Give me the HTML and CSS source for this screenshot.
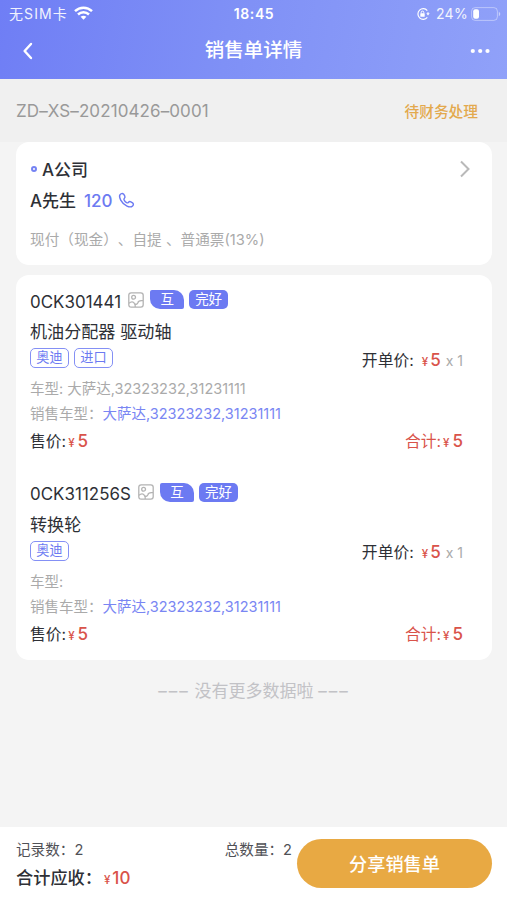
FILE: index.html
```html
<!DOCTYPE html>
<html lang="zh-CN">
<head>
    <meta charset="UTF-8">
    <meta name="viewport" content="width=device-width, initial-scale=1.0">
    <title>销售单详情</title>
    <link rel="stylesheet" href="styles.css">
</head>
<body>
    <header class="header">
        <div class="status-bar">
            <div class="status-left">
                <span class="carrier">无SIM卡</span>
                <svg class="wifi" width="19" height="14" viewBox="0 0 19 14" fill="none" stroke="#fff" stroke-width="2.5">
                    <path d="M1 5.1C5.8.5 13.2.5 18 5.1"/>
                    <path d="M4 8.5c3.1-2.9 7.9-2.9 11 0"/>
                    <path d="M6.6 10.8c1.7-1.5 4.1-1.5 5.8 0L9.5 13.8z" fill="#fff" stroke="none"/>
                </svg>
            </div>
            <span class="time">18:45</span>
            <div class="status-right">
                <svg class="lock" width="14" height="14" viewBox="0 0 14 14" fill="none" stroke="#fff" stroke-width="1.2">
                    <path d="M11.3 3.6A5.3 5.3 0 1 0 11.3 10.4M12 5.2v1.6"/>
                    <path d="M10.3 6.2h3.4L12 8.6z" fill="#fff" stroke="none"/>
                    <rect x="4.3" y="6.3" width="4.4" height="3.5" rx=".6" fill="#fff" stroke="none"/>
                    <path d="M5.2 6.5V5.4a1.3 1.3 0 0 1 2.6 0v1.1" stroke-width="1"/>
                </svg>
                <span class="percent">24%</span>
                <svg class="battery" width="30" height="14" viewBox="0 0 30 14" fill="none">
                    <rect x=".6" y=".6" width="25.8" height="12.8" rx="3.6" stroke="#fff" stroke-opacity=".4"/>
                    <rect x="2.2" y="2.2" width="5.8" height="9.6" rx="2" fill="#fff"/>
                    <path d="M27.8 4.8c2 .8 2 3.6 0 4.4z" fill="#fff" fill-opacity=".5"/>
                </svg>
            </div>
        </div>
        <nav class="nav">
            <svg class="back" width="12" height="18" viewBox="0 0 12 18" fill="none" stroke="#fff" stroke-width="2.4" stroke-linecap="round" stroke-linejoin="round">
                <path d="M9 2L2.6 9 9 16"/>
            </svg>
            <h1>销售单详情</h1>
            <svg class="more" width="20" height="6" viewBox="0 0 20 6" fill="#fff">
                <circle cx="2.8" cy="3" r="2.1"/>
                <circle cx="10.2" cy="3" r="2.1"/>
                <circle cx="17.5" cy="3" r="2.1"/>
            </svg>
        </nav>
    </header>

    <div class="order-bar">
        <span class="order-no">ZD–XS–20210426–0001</span>
        <span class="order-status">待财务处理</span>
    </div>

    <main class="content">
        <section class="card customer">
            <div class="company">
                <i class="dot"></i>
                <span>A公司</span>
                <svg class="arrow" width="12" height="18" viewBox="0 0 12 18" fill="none" stroke="#b9b9b9" stroke-width="2">
                    <path d="M2 1.5L9.5 9 2 16.5"/>
                </svg>
            </div>
            <div class="contact">
                <span class="person">A先生</span>
                <a class="phone">120</a>
                <svg width="17" height="17" viewBox="0 0 17 17" fill="none" stroke="#6c7af2" stroke-width="1.4" stroke-linejoin="round">
                    <path d="M1.9 2.9C2.8 1.5 4.500 1 5.700 2.200l1.100 1.900c.5 1 .1 1.700-.6 2.400-.5.5-.4 1 .1 1.800.6 1 1.300 1.700 2.300 2.300.7.4 1.200.4 1.700-.1.700-.8 1.500-1.200 2.500-.7l1.800 1.100c1.100.8 1 2.100 0 3-1.400 1.300-3.500 1.200-5.600.2-2.700-1.300-5-3.500-6.300-6-1-2-1.700-3.700-.8-5.200z"/>
                </svg>
            </div>
            <p class="payment">现付（现金）、自提 、普通票(13%)</p>
        </section>

        <section class="card goods">
            <article class="item">
                <div class="item-head">
                    <span class="code">0CK301441</span>
                    <svg class="pic" width="16" height="16" viewBox="0 0 16 16" fill="none" stroke="#b3b3b3" stroke-width="1.3">
                        <rect x=".8" y=".8" width="14.4" height="14.4" rx="2.4"/>
                        <circle cx="5.6" cy="5.3" r="1.9"/>
                        <path d="M1 11.3c2.2-2 4.2-1.8 5.4.1 1 1.5 1 2.5.8 3.6M6.8 12c1.5.5 2.7.2 3-1.1.3-1.7 2.2-2.6 5.2-2.2"/>
                    </svg>
                    <span class="tag leaf">互</span>
                    <span class="tag">完好</span>
                </div>
                <h2 class="name">机油分配器 驱动轴</h2>
                <div class="brand-row">
                    <span class="brand">奥迪</span>
                    <span class="brand">进口</span>
                    <div class="unit">开单价:<span class="yen">¥</span><b>5</b><small>x 1</small></div>
                </div>
                <p class="model">车型: 大萨达,32323232,31231111</p>
                <p class="model sale">销售车型：<em>大萨达,32323232,31231111</em></p>
                <div class="price-row">
                    <div>售价:<span class="yen">¥</span><b>5</b></div>
                    <div class="total">合计:<span class="yen">¥</span><b>5</b></div>
                </div>
            </article>

            <article class="item">
                <div class="item-head">
                    <span class="code">0CK311256S</span>
                    <svg class="pic" width="16" height="16" viewBox="0 0 16 16" fill="none" stroke="#b3b3b3" stroke-width="1.3">
                        <rect x=".8" y=".8" width="14.4" height="14.4" rx="2.4"/>
                        <circle cx="5.6" cy="5.3" r="1.9"/>
                        <path d="M1 11.3c2.2-2 4.2-1.8 5.4.1 1 1.5 1 2.5.8 3.6M6.8 12c1.5.5 2.7.2 3-1.1.3-1.7 2.2-2.6 5.2-2.2"/>
                    </svg>
                    <span class="tag leaf">互</span>
                    <span class="tag">完好</span>
                </div>
                <h2 class="name">转换轮</h2>
                <div class="brand-row">
                    <span class="brand">奥迪</span>
                    <div class="unit">开单价:<span class="yen">¥</span><b>5</b><small>x 1</small></div>
                </div>
                <p class="model">车型:</p>
                <p class="model sale">销售车型：<em>大萨达,32323232,31231111</em></p>
                <div class="price-row">
                    <div>售价:<span class="yen">¥</span><b>5</b></div>
                    <div class="total">合计:<span class="yen">¥</span><b>5</b></div>
                </div>
            </article>
        </section>

        <p class="no-more"><span>–––</span> 没有更多数据啦 <span>–––</span></p>
    </main>

    <footer class="footer">
        <div class="summary">
            <div class="counts">
                <span>记录数：2</span>
                <span>总数量：2</span>
            </div>
            <div class="receivable">合计应收：<span class="yen">¥</span><b>10</b></div>
        </div>
        <button class="share">分享销售单</button>
    </footer>
</body>
</html>
```
FILE: styles.css
```css
* {
    box-sizing: border-box;
    margin: 0;
    padding: 0;
}
body {
    display: flex;
    flex-direction: column;
    height: 900px;
    overflow: hidden;
    font-family: Inter, "Noto Sans CJK SC", sans-serif;
    text-spacing-trim: space-all;
    background-color: #f4f4f4;
    color: #2e3036;
}
svg {
    display: block;
    flex-shrink: 0;
}
b, em, i {
    font-style: normal;
    font-weight: 500;
}

/* header */
.header {
    height: 79px;
    background: linear-gradient(100deg, #6f7ef5 0%, #7f90f6 45%, #90a1f9 100%);
    color: #fff;
}
.status-bar {
    display: grid;
    grid-template-columns: 1fr auto 1fr;
    align-items: center;
    height: 28px;
    padding: 0 6px 0 9px;
}
.status-left, .status-right {
    display: flex;
    align-items: center;
}
.status-right {
    justify-content: flex-end;
}
.carrier {
    font-size: 14px;
    letter-spacing: 1.1px;
    line-height: 20px;
    opacity: 0.9;
}
.wifi {
    margin: -2px 0 0 6px;
}
.time {
    font-size: 14px;
    font-weight: 600;
    letter-spacing: 0.6px;
    margin: -2px 2px 0 0;
}
.percent {
    margin: -1px 3px 0 6px;
    font-size: 14px;
    letter-spacing: 0.3px;
    opacity: 0.9;
}
.nav {
    display: flex;
    align-items: center;
    justify-content: space-between;
    height: 44px;
    padding: 0 17px 0 22px;
}
.nav h1 {
    padding-left: 3px;
    font-size: 19.5px;
    font-weight: 500;
    line-height: 44px;
}
.back {
    margin-top: 2px;
}
.more {
    margin-top: 2px;
}

/* order number */
.order-bar {
    display: flex;
    align-items: center;
    justify-content: space-between;
    height: 63px;
    padding: 0 29px 0 16px;
    background-color: #f0f0f0;
}
.order-no {
    font-size: 17px;
    letter-spacing: 0.1px;
    color: #999;
}
.order-status {
    font-size: 14.7px;
    font-weight: 500;
    color: #e3a94d;
}

/* cards */
.content {
    flex: 1;
    padding: 0 15px 0 16px;
}
.card {
    border-radius: 13px;
    background-color: #fff;
}
.customer {
    height: 123px;
    padding: 12px 21px 0 14px;
}
.company, .contact {
    display: flex;
    align-items: center;
    font-size: 17px;
    font-weight: 500;
}
.company {
    height: 29px;
}
.contact {
    height: 34px;
}
.person {
    margin-top: -1px;
}
.dot {
    width: 6px;
    height: 6px;
    margin: 0 5px 0 1px;
    border: 2px solid #7583f3;
    border-radius: 50%;
}
.arrow {
    margin-left: auto;
}
.phone {
    margin: 2px 5px 0 8px;
    color: #6c7af2;
}
.payment {
    margin-top: 10px;
    font-size: 14.65px;
    line-height: 26px;
    color: #aaa;
}
.goods {
    height: 385px;
    margin-top: 10px;
    padding: 11px 29px 0 14px;
}
.item {
    height: 192.5px;
}
.item-head {
    display: flex;
    align-items: center;
    height: 28px;
}
.code {
    padding-top: 3px;
    font-size: 16.9px;
    letter-spacing: 0.05px;
}
.pic {
    margin: -1px 6px 0 7px;
}
.tag {
    width: 39px;
    height: 19px;
    margin-top: -1px;
    border-radius: 5px;
    background-color: #6c7af2;
    color: #fff;
    font-size: 13.5px;
    line-height: 19px;
    text-align: center;
}
.leaf {
    width: 34px;
    margin-right: 5px;
    border-radius: 2px 10px 2px 10px;
}
.name {
    padding-top: 1px;
    font-size: 17.1px;
    font-weight: 400;
    line-height: 33px;
}
.brand-row {
    display: flex;
    align-items: center;
    gap: 5px;
    height: 20px;
}
.brand {
    width: 39px;
    height: 20px;
    border: 1.5px solid #8490f5;
    border-radius: 5px;
    color: #6c7af2;
    font-size: 13.2px;
    line-height: 17px;
    text-align: center;
}
.unit {
    margin-left: auto;
    padding-top: 2px;
    font-size: 15.8px;
    white-space: nowrap;
}
.unit .yen {
    margin-left: 8px;
}
.unit small {
    margin-left: 5px;
    font-size: 14px;
    color: #aaa;
}
.yen {
    margin: 0 2px;
    font-size: 11.5px;
    font-weight: 500;
    color: #d9534a;
}
.yen + b {
    font-size: 17px;
    color: #d9534a;
}
.model {
    margin-top: 8px;
    font-size: 14.5px;
    line-height: 25px;
    color: #aaa;
}
.model em {
    font-weight: 400;
    color: #7986f3;
}
.sale {
    margin-top: 0;
}
.price-row {
    display: flex;
    align-items: center;
    justify-content: space-between;
    height: 29px;
    font-size: 15.8px;
}
.price-row .yen {
    margin-right: 3px;
}
.total {
    color: #d9534a;
}
.no-more {
    margin-top: 18px;
    font-size: 17px;
    line-height: 26px;
    text-align: center;
    color: #c2c2c6;
}
.no-more span {
    letter-spacing: 2px;
}

/* footer */
.footer {
    display: flex;
    align-items: center;
    justify-content: space-between;
    height: 73px;
    padding: 0 15px 0 16px;
    background-color: #fff;
}
.summary {
    width: 276px;
    padding-top: 4px;
}
.counts {
    display: flex;
    justify-content: space-between;
    font-size: 14.6px;
    line-height: 26px;
    color: #505156;
}
.receivable {
    font-size: 17.2px;
    font-weight: 500;
    line-height: 30px;
}
.share {
    width: 195px;
    height: 49px;
    padding-bottom: 2px;
    border: none;
    border-radius: 25px;
    background-color: #e8a943;
    color: #fff;
    font-family: inherit;
    font-size: 18.2px;
    font-weight: 500;
}
```
